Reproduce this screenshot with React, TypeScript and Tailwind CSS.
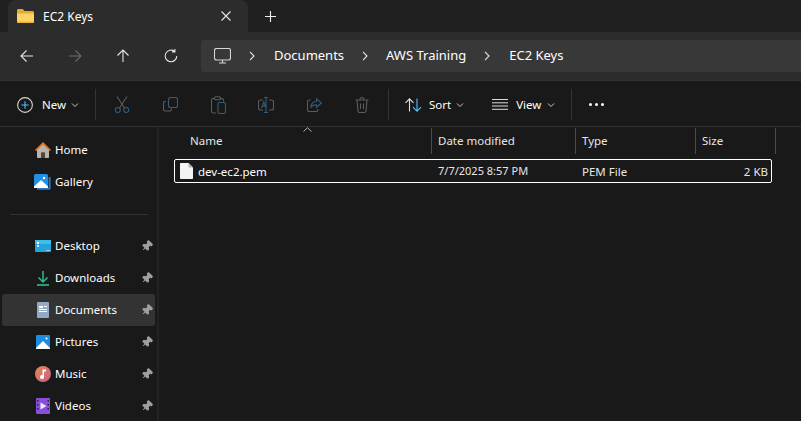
import React from 'react';
import { Pin } from 'lucide-react';

const Chevron = ({ className = '' }: { className?: string }) => (
  <svg width="8" height="6" viewBox="0 0 8 6" fill="none" stroke="currentColor" strokeWidth="1" className={className}>
    <path d="M1 1.5 L4 4.5 L7 1.5" />
  </svg>
);

const CrumbSep = () => (
  <svg width="8" height="10" viewBox="0 0 8 10" fill="none" stroke="#e4e4e4" strokeWidth="1.1">
    <path d="M2 .8 L6 5 L2 9.2" />
  </svg>
);

const FolderIcon = () => (
  <svg width="17" height="14" viewBox="0 0 17 14">
    <path d="M0 1.5C0 .7.6 0 1.4 0h4.2l2 2H15.5c.8 0 1.5.7 1.5 1.5V5H0z" fill="#e8a92c" />
    <path d="M0 4.5h17v8c0 .8-.7 1.5-1.5 1.5h-14C.7 14 0 13.300 0 12.500z" fill="#fcd463" />
    <path d="M0 12.600h17V13c0 .6-.7 1-1.500 1h-14C.7 14 0 13.600 0 13z" fill="#eeb33a" />
  </svg>
);

const NavIcon = ({ d, color = '#e6e6e6' }: { d: string; color?: string }) => (
  <div className="w-12 h-12 flex items-center justify-center">
    <svg width="16" height="16" viewBox="0 0 16 16" fill="none" stroke={color} strokeWidth="1.1">
      <path d={d} />
    </svg>
  </div>
);

const ToolButton = ({ children }: { children: React.ReactNode }) => (
  <div className="w-12 h-full flex items-center justify-center">{children}</div>
);

const Divider = () => <div className="w-px h-[31px] bg-[#333333]" />;

const ScissorsIcon = () => (
  <svg width="16" height="17" viewBox="0 0 16 17" fill="none" strokeWidth="1.1">
    <path d="M3 .5 L10.500 12 M13 .5 L5.500 12" stroke="#5c5c5c" />
    <circle cx="3.800" cy="14" r="2.500" stroke="#2f5f80" />
    <circle cx="12.200" cy="14" r="2.500" stroke="#2f5f80" />
  </svg>
);

const CopyIcon = () => (
  <svg width="15" height="15" viewBox="0 0 15 15" fill="none" strokeWidth="1.100">
    <path d="M3 4.500H2C1 4.500.5 5 .5 6v6.500c0 1 .5 1.500 1.500 1.500h5c1 0 1.500-.5 1.500-1.500V11.500" stroke="#5c5c5c" />
    <rect x="5.500" y=".5" width="9" height="10" rx="2" stroke="#2f5f80" />
  </svg>
);

const PasteIcon = () => (
  <svg width="15" height="18" viewBox="0 0 15 18" fill="none" strokeWidth="1.100">
    <path d="M4 2.500H2C1 2.500.5 3 .5 4v11.500c0 1 .5 1.500 1.500 1.500h3M9 2.500h2c1 0 1.500.5 1.500 1.500v1.500" stroke="#5c5c5c" />
    <rect x="3.500" y=".8" width="6" height="3" rx="1" stroke="#5c5c5c" />
    <rect x="7" y="6.500" width="7.500" height="11" rx="1.500" stroke="#2f5f80" />
  </svg>
);

const RenameIcon = () => (
  <svg width="16" height="16" viewBox="0 0 16 16" fill="none" strokeWidth="1.100">
    <path d="M5 3H2.500C1.300 3 .5 3.800.5 5v6c0 1.200.8 2 2 2H5M11 3h2.500c1.200 0 2 .8 2 2v6c0 1.200-.8 2-2 2H11" stroke="#5c5c5c" />
    <path d="M8 .5v15M6 .5h4M6 15.500h4M3.500 11 L5.800 5 L8 11M4.300 9h3" stroke="#2f5f80" />
  </svg>
);

const ShareIcon = () => (
  <svg width="15" height="14" viewBox="0 0 15 14" fill="none" strokeWidth="1.100">
    <path d="M3.500 2H2.500C1.300 2 .5 2.800.5 4v7.500c0 1.200.8 2 2 2H9c1.200 0 2-.8 2-2V11" stroke="#5c5c5c" />
    <path d="M9.500.8 L14.500 5 L9.500 9.200V6.800C7 6.800 5 7.500 3.800 9.800 4 6 6 3.600 9.500 3.300z" stroke="#2f5f80" />
  </svg>
);

const TrashIcon = () => (
  <svg width="14" height="16" viewBox="0 0 14 16" fill="none" stroke="#5c5c5c" strokeWidth="1.100">
    <path d="M.5 3h13M2 3l1 11c.1 1 .7 1.500 1.500 1.500h5c.8 0 1.400-.5 1.500-1.500l1-11M4.800 3c0-1.500.9-2.500 2.200-2.500S9.200 1.500 9.200 3M5.500 6.500v5.500M8.500 6.500v5.500" />
  </svg>
);

const NewIcon = () => (
  <svg width="16" height="16" viewBox="0 0 16 16" fill="none" strokeWidth="1.100">
    <circle cx="8" cy="8" r="7.400" stroke="#d4d4d4" />
    <path d="M8 4.300v7.400M4.300 8h7.400" stroke="#4cc2ff" />
  </svg>
);

const SortIcon = () => (
  <svg width="17" height="14" viewBox="0 0 17 14" fill="none" strokeWidth="1.100">
    <path d="M4.500 13.500V.8M.5 4.800 L4.500.8 L8.500 4.800" stroke="#e0e0e0" />
    <path d="M12 .5v12.700M8 9.200 L12 13.200 L16 9.200" stroke="#4cc2ff" />
  </svg>
);

const ViewIcon = () => (
  <svg width="16" height="11" viewBox="0 0 16 11" fill="none" stroke="#dcdcdc" strokeWidth="1">
    <path d="M0 .5h16M0 3.800h16M0 7h16M0 10.300h16" />
  </svg>
);

const HomeIcon = () => (
  <svg width="16" height="16" viewBox="0 0 16 16">
    <path d="M2 7.500 L8 2 L14 7.500V15c0 .5-.3 1-1 1H3c-.7 0-1-.5-1-1z" fill="#b8b3ae" />
    <path d="M6 16v-5c0-.5.300-.8.800-.8h2.400c.5 0 .8.300.8.800v5z" fill="#4c4743" />
    <path d="M0 8 L8 0 L16 8 L15 9 L8 2.400 L1 9z" fill="#e8791e" />
  </svg>
);

const GalleryIcon = () => (
  <svg width="17" height="16" viewBox="0 0 17 16">
    <path d="M3 15.800h12c1 0 1.600-.6 1.600-1.600V3h-2v11H3z" fill="#2a78c4" />
    <rect x="0" y="0" width="14" height="14" rx="1.500" fill="#1e90e6" />
    <path d="M0 12.500 L7 6 L14 12.500V14H0z" fill="#ffffff" />
    <circle cx="10" cy="4" r="1.200" fill="#ffffff" />
  </svg>
);

const DesktopIcon = () => (
  <svg width="16" height="12" viewBox="0 0 16 12">
    <rect width="16" height="12" rx="1" fill="#27a3dc" />
    <rect y="0" width="16" height="4" fill="#3cc0e8" />
    <rect x="2" y="2" width="2" height="2" fill="#ffffff" />
    <rect x="2" y="5" width="2" height="2" fill="#d6f1fb" />
    <rect x="11.500" y="10" width="1" height="1" fill="#ffffff" />
    <rect x="13.500" y="10" width="1" height="1" fill="#ffffff" />
  </svg>
);

const DownloadsIcon = () => (
  <svg width="12" height="15" viewBox="0 0 12 15" fill="none" stroke="#2dbb8c" strokeWidth="1.500">
    <path d="M6 0v10.500M1.500 6.500 L6 11 L10.500 6.500" />
    <path d="M0 14h12" stroke="#35c79a" />
  </svg>
);

const DocumentsIcon = () => (
  <svg width="12" height="16" viewBox="0 0 12 16">
    <rect width="12" height="16" rx="1" fill="#93a9c4" />
    <rect x="2" y="4" width="4" height="2" fill="#ffffff" />
    <rect x="7" y="4" width="3" height="1" fill="#ffffff" />
    <rect x="2" y="7" width="8" height="1" fill="#ffffff" />
    <rect x="2" y="9" width="8" height="1" fill="#ffffff" />
  </svg>
);

const PicturesIcon = () => (
  <svg width="14" height="14" viewBox="0 0 14 14">
    <rect width="14" height="14" rx="1" fill="#1c8be0" />
    <path d="M0 13 L7 6 L14 13V14H0z" fill="#ffffff" />
    <circle cx="10.500" cy="3.500" r="1.100" fill="#ffffff" />
  </svg>
);

const MusicIcon = () => (
  <svg width="16" height="16" viewBox="0 0 16 16">
    <defs>
      <linearGradient id="music-bg" x1="0" y1="0" x2="1" y2="1">
        <stop offset="0" stopColor="#e8894f" />
        <stop offset="1" stopColor="#c4608a" />
      </linearGradient>
    </defs>
    <circle cx="8" cy="8" r="8" fill="url(#music-bg)" />
    <path d="M7.500 3.500h3.500v2H9v5.500a2 2 0 1 1-1.500-1.900z" fill="#ffffff" />
  </svg>
);

const VideosIcon = () => (
  <svg width="14" height="16" viewBox="0 0 14 16">
    <rect width="14" height="16" rx="1" fill="#8a4fd8" />
    <path d="M4.500 4.500 L10.500 8 L4.500 11.500z" fill="#efe6ff" />
    <rect x="1" y="2" width="1.500" height="1.500" fill="#2a1a48" />
    <rect x="1" y="6" width="1.500" height="1.500" fill="#2a1a48" />
    <rect x="1" y="10" width="1.500" height="1.500" fill="#2a1a48" />
    <rect x="11.500" y="2" width="1.500" height="1.500" fill="#2a1a48" />
    <rect x="11.500" y="6" width="1.500" height="1.500" fill="#2a1a48" />
    <rect x="11.500" y="10" width="1.500" height="1.500" fill="#2a1a48" />
  </svg>
);

const FileIcon = () => (
  <svg width="13" height="16" viewBox="0 0 13 16">
    <path d="M1 0h7.500L13 4.500V15c0 .6-.4 1-1 1H1c-.6 0-1-.4-1-1V1c0-.6.4-1 1-1z" fill="#f4f4f4" />
    <path d="M8.500 0v3.500c0 .6.400 1 1 1H13z" fill="#b5b5b5" />
  </svg>
);

interface NavItem {
  label: string;
  icon: React.ReactNode;
  pinned?: boolean;
  active?: boolean;
}

const topItems: NavItem[] = [
  { label: 'Home', icon: <HomeIcon /> },
  { label: 'Gallery', icon: <GalleryIcon /> },
];

const pinnedItems: NavItem[] = [
  { label: 'Desktop', icon: <DesktopIcon />, pinned: true },
  { label: 'Downloads', icon: <DownloadsIcon />, pinned: true },
  { label: 'Documents', icon: <DocumentsIcon />, pinned: true, active: true },
  { label: 'Pictures', icon: <PicturesIcon />, pinned: true },
  { label: 'Music', icon: <MusicIcon />, pinned: true },
  { label: 'Videos', icon: <VideosIcon />, pinned: true },
];

const SideRow = ({ item }: { item: NavItem }) => (
  <div className={`h-8 ml-[2px] w-[153px] shrink-0 flex items-center rounded-[3px] ${item.active ? 'bg-[#333333]' : ''}`}>
    <div className="w-[17px] ml-[32px] flex justify-center">{item.icon}</div>
    <span className="ml-[4px] text-[11.5px] text-white">{item.label}</span>
    {item.pinned && <Pin size={12} className="ml-auto mr-[2px] rotate-45 text-[#a0a0a0] fill-[#a0a0a0]" />}
  </div>
);

const columns = [
  { label: 'Name', width: 'w-[273px]', pad: 'pl-[31px]' },
  { label: 'Date modified', width: 'w-[144px]', pad: 'pl-[6px]' },
  { label: 'Type', width: 'w-[120px]', pad: 'pl-[6px]' },
  { label: 'Size', width: 'w-[80px]', pad: 'pl-[6px]' },
];

export default function App() {
  return (
    <div className="w-[801px] h-[421px] overflow-hidden flex flex-col bg-[#191919] text-white font-['Noto_Sans',sans-serif]">
      {/* tab strip */}
      <div className="h-8 shrink-0 flex items-end bg-[#202020]">
        <div className="ml-2 w-[240px] h-8 flex items-center rounded-t-lg bg-[#2c2c2c]">
          <div className="ml-[9px]"><FolderIcon /></div>
          <span className="ml-[9px] pt-[1px] text-[12px]">EC2 Keys</span>
          <svg width="10" height="10" viewBox="0 0 10 10" stroke="#e8e8e8" strokeWidth="1.100" className="ml-auto mr-[17px]">
            <path d="M.5.5 L9.500 9.500 M9.500.5 L.5 9.500" />
          </svg>
        </div>
        <div className="w-11 h-8 flex items-center justify-center">
          <svg width="11" height="11" viewBox="0 0 11 11" stroke="#f0f0f0" strokeWidth="1.100">
            <path d="M5.500 0v11M0 5.500h11" />
          </svg>
        </div>
      </div>

      {/* address row */}
      <div className="h-[48px] shrink-0 flex items-center pl-[3px] bg-[#2c2c2c]">
        <NavIcon d="M14 8H2M7.500 2.500 L2 8 L7.500 13.500" />
        <NavIcon d="M2 8h12M8.500 2.500 L14 8 L8.500 13.500" color="#6a6a6a" />
        <NavIcon d="M8 14V2M2.500 7.500 L8 2 L13.500 7.500" />
        <NavIcon d="M13.800 8A5.800 5.800 0 1 1 11.700 3.500M11.900 1v2.900H9" />
        <div className="ml-[6px] flex-1 h-8 flex items-center rounded-l-[4px] bg-[#383838] text-[13px]">
          <svg width="17" height="16" viewBox="0 0 17 16" fill="none" stroke="#d6d6d6" strokeWidth="1.100" className="ml-[13px]">
            <rect x=".5" y=".5" width="16" height="11.500" rx="2" />
            <path d="M5 15h7M8.500 12v3" />
          </svg>
          <div className="ml-[17px]"><CrumbSep /></div>
          <span className="ml-[18px]">Documents</span>
          <div className="ml-[17px]"><CrumbSep /></div>
          <span className="ml-[17px]">AWS Training</span>
          <div className="ml-[17px]"><CrumbSep /></div>
          <span className="ml-[18px]">EC2 Keys</span>
        </div>
      </div>

      {/* toolbar */}
      <div className="h-[47px] shrink-0 flex items-center pt-[2px] border-t border-b border-[#333333] bg-[#191919]">
        <div className="ml-[17px] flex items-center">
          <NewIcon />
          <span className="ml-[9px] text-[11.5px]">New</span>
          <Chevron className="ml-[5px] text-[#c8c8c8]" />
        </div>
        <div className="ml-[16px]"><Divider /></div>
        <div className="ml-[2px] h-full flex">
          <ToolButton><ScissorsIcon /></ToolButton>
          <ToolButton><CopyIcon /></ToolButton>
          <ToolButton><PasteIcon /></ToolButton>
          <ToolButton><RenameIcon /></ToolButton>
          <ToolButton><ShareIcon /></ToolButton>
          <ToolButton><TrashIcon /></ToolButton>
        </div>
        <div className="ml-[2px]"><Divider /></div>
        <div className="ml-[16px] flex items-center">
          <SortIcon />
          <span className="ml-[7px] text-[11.5px]">Sort</span>
          <Chevron className="ml-[5px] text-[#c8c8c8]" />
        </div>
        <div className="ml-[28px] flex items-center">
          <ViewIcon />
          <span className="ml-[8px] text-[11.5px]">View</span>
          <Chevron className="ml-[6px] text-[#c8c8c8]" />
        </div>
        <div className="ml-[16px]"><Divider /></div>
        <div className="ml-[17px] flex gap-[3px]">
          <div className="w-[3px] h-[3px] rounded-full bg-white" />
          <div className="w-[3px] h-[3px] rounded-full bg-white" />
          <div className="w-[3px] h-[3px] rounded-full bg-white" />
        </div>
      </div>

      <div className="flex-1 min-h-0 flex">
        {/* sidebar */}
        <div className="w-[157px] shrink-0 pt-[7px] flex flex-col overflow-hidden">
          {topItems.map(item => <SideRow key={item.label} item={item} />)}
          <div className="ml-[10px] w-[138px] h-px shrink-0 bg-[#333333] mt-[16px] mb-[15px]" />
          {pinnedItems.map(item => <SideRow key={item.label} item={item} />)}
        </div>
        <div className="w-[2px] shrink-0 bg-[#232323]" />

        {/* file list */}
        <div className="flex-1 min-w-0 flex flex-col">
          <div className="relative mt-[1px] h-[26px] shrink-0 flex items-stretch">
            {columns.map(col => (
              <div key={col.label} className={`${col.width} ${col.pad} flex items-center border-r border-[#4a4a4a] text-[11.5px] text-[#e6e6e6]`}>
                {col.label}
              </div>
            ))}
            <svg width="9" height="5" viewBox="0 0 9 5" fill="none" stroke="#b4b4b4" className="absolute left-[144px] -top-[1px]">
              <path d="M.5 4.500 L4.500.8 L8.500 4.500" />
            </svg>
          </div>
          <div className="mt-[5px] ml-[15px] w-[598px] h-[24px] flex items-center border border-white rounded-[2px] text-[11.5px] text-[#e6e6e6]">
            <div className="ml-[5px]"><FileIcon /></div>
            <span className="ml-[5px] pt-[1px] w-[240px] text-white">dev-ec2.pem</span>
            <span className="pt-[1px] w-[144px] text-[11px]">7/7/2025 8:57 PM</span>
            <span className="pt-[1px]">PEM File</span>
            <span className="ml-auto mr-[3px] pt-[1px]">2 KB</span>
          </div>
        </div>
      </div>
    </div>
  );
}
